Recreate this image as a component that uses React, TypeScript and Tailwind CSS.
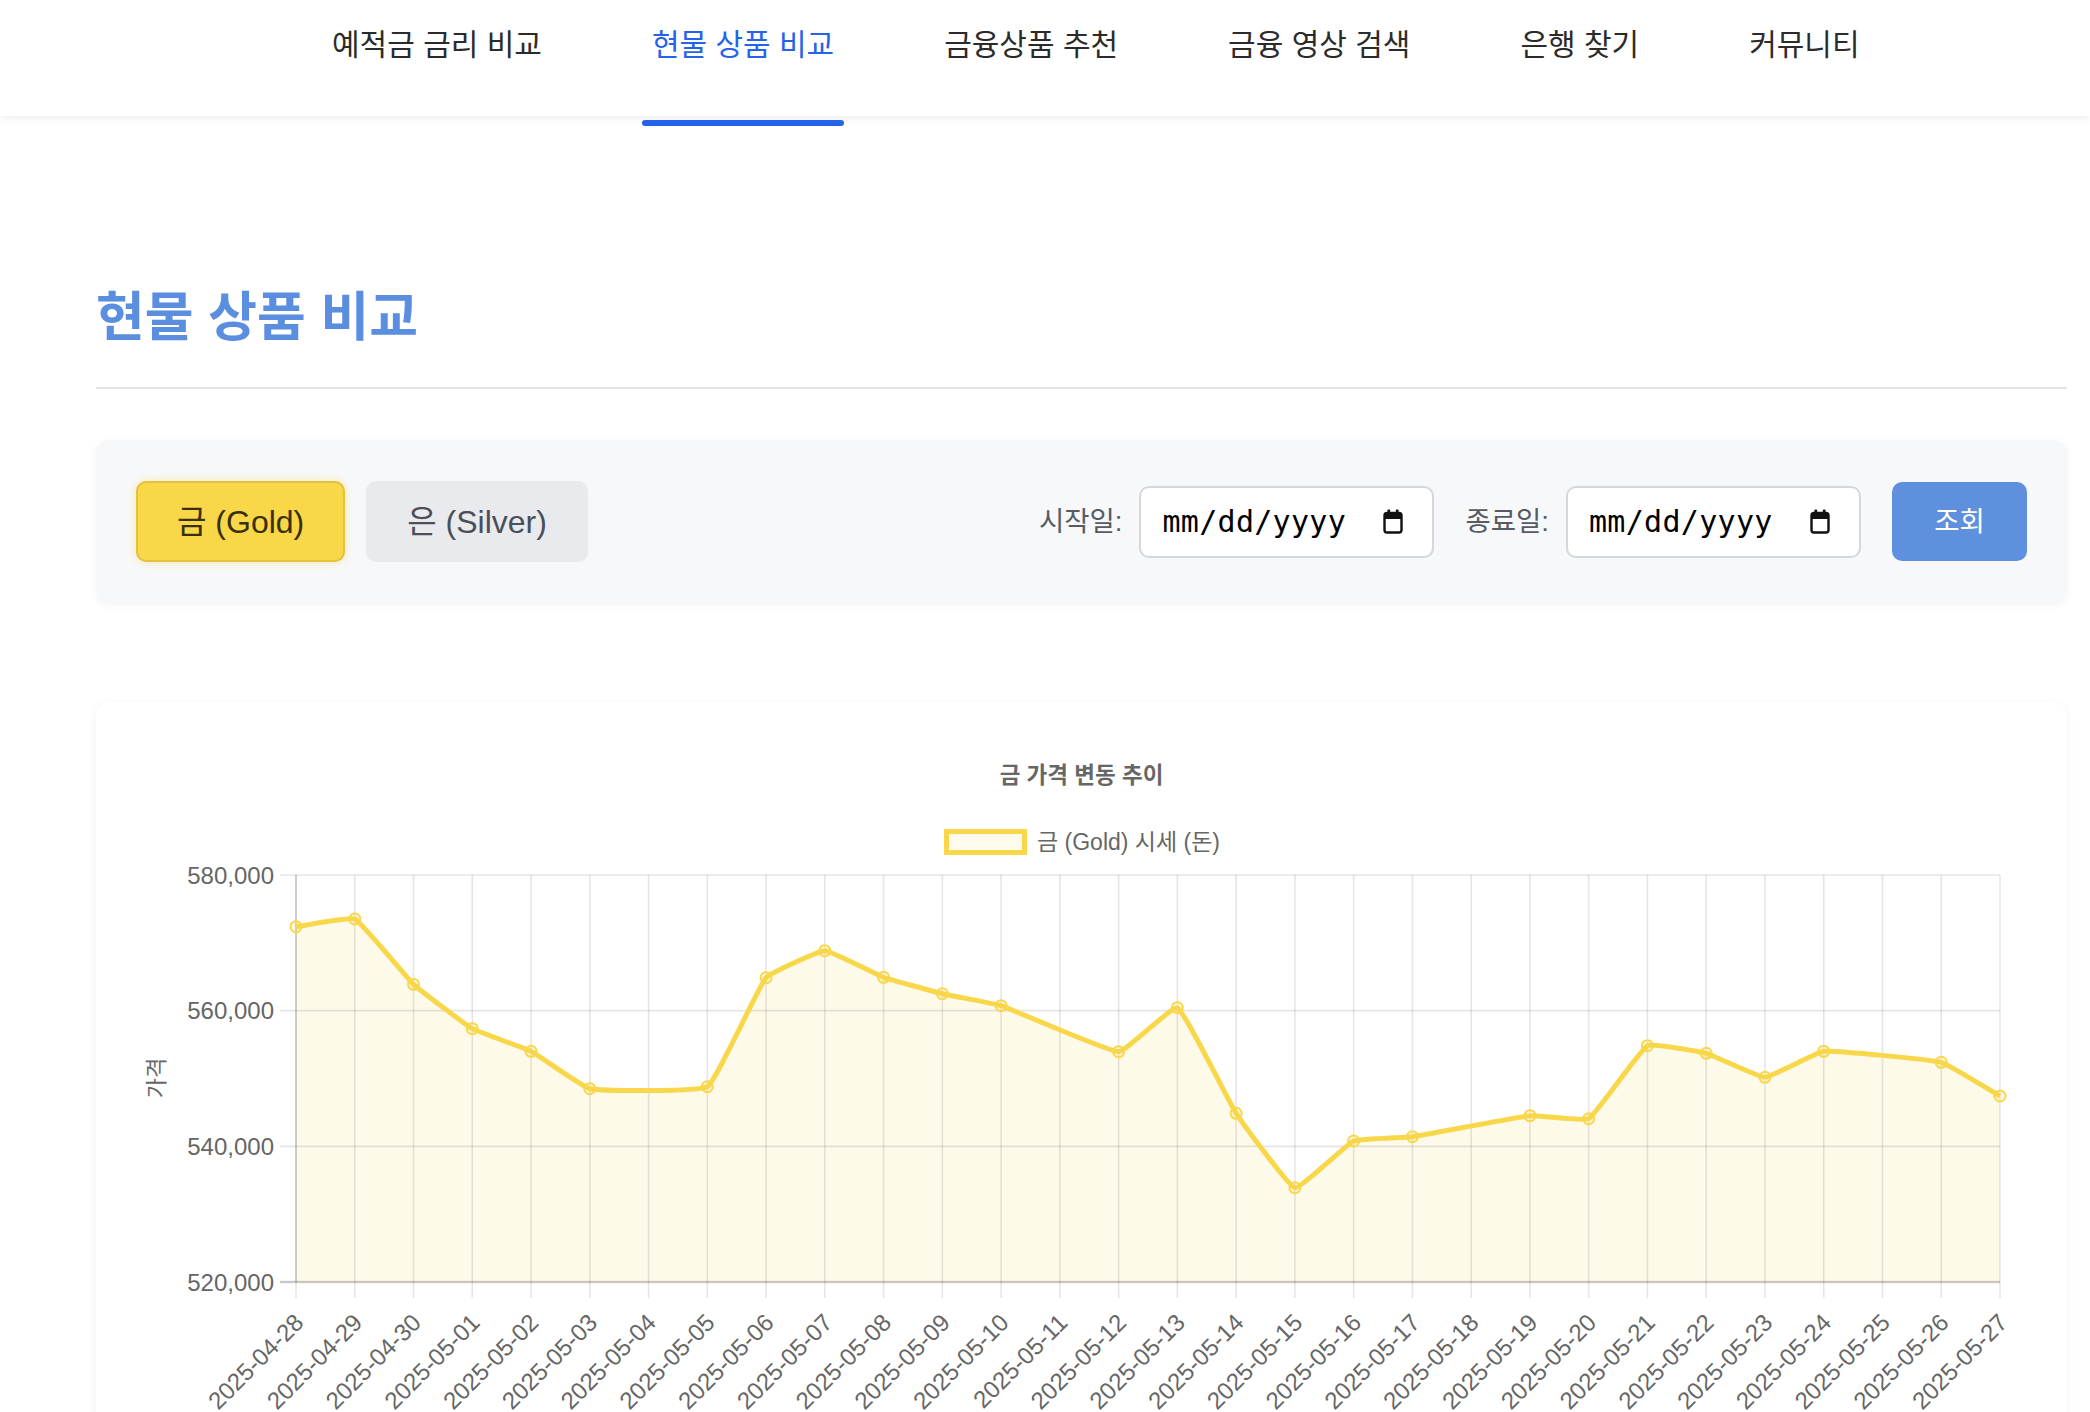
import React from "react";

const FONT = '"Liberation Sans","Noto Sans CJK KR",sans-serif';

const navItems = ["예적금 금리 비교", "현물 상품 비교", "금융상품 추천", "금융 영상 검색", "은행 찾기", "커뮤니티"];

const data: (number | null)[] = [
  572379, 573514, 563887, 557342, 554010, 548497, null, 548791, 564860, 568840,
  564919, 562501, 560732, null, 553951, 560437, 544870, 533902, 540786, 541420,
  null, 544516, 544074, 554835, 553715, 550177, 554010, null, 552388, 547420,
];

const labels: string[] = [
  "2025-04-28", "2025-04-29", "2025-04-30",
  ...Array.from({ length: 27 }, (_, i) => `2025-05-${String(i + 1).padStart(2, "0")}`),
];

const X0 = 200;
const X1 = 1904;
const YT = 173;
const YB = 580;
const xs = (i: number) => X0 + (i * (X1 - X0)) / 29;
const ys = (v: number) => YB - ((v - 520000) / 60000) * (YB - YT);

type P = { x: number; y: number };

function buildPaths() {
  const pts: P[] = [];
  data.forEach((v, i) => {
    if (v != null) pts.push({ x: xs(i), y: ys(v) });
  });
  const t = 0.1;
  const cp1: P[] = [];
  const cp2: P[] = [];
  for (let i = 0; i < pts.length; i++) {
    const cur = pts[i];
    const prev = pts[i - 1] || cur;
    const next = pts[i + 1] || cur;
    const d01 = Math.hypot(cur.x - prev.x, cur.y - prev.y);
    const d12 = Math.hypot(next.x - cur.x, next.y - cur.y);
    let s01 = d01 / (d01 + d12);
    let s12 = d12 / (d01 + d12);
    if (isNaN(s01)) s01 = 0;
    if (isNaN(s12)) s12 = 0;
    const fa = t * s01;
    const fb = t * s12;
    cp1.push({ x: cur.x - fa * (next.x - prev.x), y: Math.min(YB, Math.max(YT, cur.y - fa * (next.y - prev.y))) });
    cp2.push({ x: cur.x + fb * (next.x - prev.x), y: Math.min(YB, Math.max(YT, cur.y + fb * (next.y - prev.y))) });
  }
  let d = `M${pts[0].x},${pts[0].y}`;
  for (let k = 1; k < pts.length; k++) {
    d += ` C${cp2[k - 1].x},${cp2[k - 1].y} ${cp1[k].x},${cp1[k].y} ${pts[k].x},${pts[k].y}`;
  }
  const fill = `${d} L${pts[pts.length - 1].x},${YB} L${pts[0].x},${YB} Z`;
  return { d, fill, pts };
}

function GoldChart() {
  const { d, fill, pts } = buildPaths();
  const gridY = [0, 1, 2, 3].map((k) => YT + (k * (YB - YT)) / 3);
  const yLabels = ["580,000", "560,000", "540,000", "520,000"];
  const gold = "#f9d74a";
  return (
    <svg width="1971" height="760" viewBox="0 0 1971 760" style={{ fontFamily: FONT }}>
      <text x="985.5" y="73" textAnchor="middle" dominantBaseline="central" fontSize="22.5" fontWeight="700" fill="#666">
        금 가격 변동 추이
      </text>
      <rect x="850.5" y="129.5" width="78" height="21" fill="#fefbec" stroke={gold} strokeWidth="5" />
      <text x="941" y="140" dominantBaseline="central" fontSize="23" fill="#666">
        금 (Gold) 시세 (돈)
      </text>
      <path d={fill} fill="rgba(249,215,74,0.12)" />
      {labels.map((_, i) => (
        <line key={`v${i}`} x1={xs(i)} x2={xs(i)} y1={YT} y2={YB + 16} stroke="rgba(0,0,0,0.1)" strokeWidth="1.6" />
      ))}
      {gridY.map((y, k) => (
        <line key={`h${k}`} x1={X0 - 16} x2={X1} y1={y} y2={y} stroke="rgba(0,0,0,0.1)" strokeWidth="1.6" />
      ))}
      <line x1={X0} x2={X0} y1={YT} y2={YB} stroke="rgba(0,0,0,0.12)" strokeWidth="2" />
      <line x1={X0 - 16} x2={X1} y1={YB} y2={YB} stroke="rgba(0,0,0,0.15)" strokeWidth="2.5" />
      {yLabels.map((l, k) => (
        <text key={l} x="178" y={gridY[k]} textAnchor="end" dominantBaseline="central" fontSize="24" fill="#666">
          {l}
        </text>
      ))}
      <text x="60" y="376" textAnchor="middle" dominantBaseline="central" fontSize="22" fill="#666" transform="rotate(-90 60 376)">
        가격
      </text>
      {labels.map((l, i) => {
        const x = xs(i) + 3;
        const y = 616;
        return (
          <text key={l} x={x} y={y} textAnchor="end" dominantBaseline="central" fontSize="24" fill="#666" transform={`rotate(-45 ${x} ${y})`}>
            {l}
          </text>
        );
      })}
      <path d={d} fill="none" stroke={gold} strokeWidth="5" />
      {pts.map((p, i) => (
        <circle key={`p${i}`} cx={p.x} cy={p.y} r="5.5" fill="rgba(249,215,74,0.12)" stroke={gold} strokeWidth="2" />
      ))}
    </svg>
  );
}

function CalendarIcon() {
  return (
    <svg width="22" height="25" viewBox="0 0 22 25">
      <rect x="2.5" y="4" width="17" height="19.5" rx="2.5" fill="none" stroke="#111" strokeWidth="2.4" />
      <rect x="2.5" y="4" width="17" height="6" fill="#111" />
      <rect x="5.5" y="0.5" width="2.6" height="5" rx="0.8" fill="#111" />
      <rect x="13.9" y="0.5" width="2.6" height="5" rx="0.8" fill="#111" />
    </svg>
  );
}

function DateBox() {
  return (
    <div className="flex h-[72px] w-[295px] items-center justify-between rounded-[10px] border-2 border-[#d4d7dc] bg-white pl-[21px] pr-[28px]">
      <span className="text-[30px] tracking-[0.3px] text-black" style={{ fontFamily: '"DejaVu Sans Mono",monospace' }}>
        mm/dd/yyyy
      </span>
      <CalendarIcon />
    </div>
  );
}

export default function App() {
  return (
    <div className="min-h-screen bg-white" style={{ fontFamily: FONT }}>
      <header className="relative z-10 h-[116px] bg-white shadow-[0_2px_10px_rgba(0,0,0,0.08)]">
        <nav className="flex gap-[90px] pl-[322px]">
          {navItems.map((item, i) => (
            <div
              key={item}
              className={`relative h-[116px] px-[10px] pt-[25px] text-[30px] leading-[40px] font-normal ${
                i === 1 ? "text-[#2563eb]" : "text-[#2b2b2b]"
              }`}
            >
              {item}
              {i === 1 && <span className="absolute left-0 right-0 -bottom-[10px] h-[6px] rounded-full bg-[#2563eb]" />}
            </div>
          ))}
        </nav>
      </header>

      <main className="ml-[96px] w-[1971px] pb-[40px]">
        <h1 className="mt-[171px] text-[53px] font-bold leading-[62px] text-[#5b8ede]">현물 상품 비교</h1>
        <div className="mt-[38px] h-[2px] bg-[#e2e2e2]" />

        <section className="mt-[51px] flex h-[163px] items-center justify-between rounded-[14px] bg-[#f7f8fa] px-[40px] shadow-[0_2px_8px_rgba(0,0,0,0.05)]">
          <div className="flex gap-[21px]">
            <button className="h-[81px] rounded-[10px] border-2 border-[#e4c03c] bg-[#f8d748] px-[39px] text-[32px] text-[#3a2f08] shadow-[0_0_10px_rgba(248,215,72,0.45)]">
              금 (Gold)
            </button>
            <button className="h-[81px] rounded-[10px] bg-[#e9eaee] px-[41px] text-[32px] text-[#4a4f59]">
              은 (Silver)
            </button>
          </div>
          <div className="flex items-center">
            <span className="mr-[17px] text-[27.5px] text-[#555a63]">시작일:</span>
            <DateBox />
            <span className="ml-[31px] mr-[17px] text-[27.5px] text-[#555a63]">종료일:</span>
            <DateBox />
            <button className="ml-[31px] h-[79px] w-[135px] rounded-[10px] bg-[#5e90dd] text-[27.5px] text-white">조회</button>
          </div>
        </section>

        <section className="mt-[99px] h-[760px] overflow-hidden rounded-[14px] bg-white shadow-[0_2px_10px_rgba(0,0,0,0.06)]">
          <GoldChart />
        </section>
      </main>
    </div>
  );
}
